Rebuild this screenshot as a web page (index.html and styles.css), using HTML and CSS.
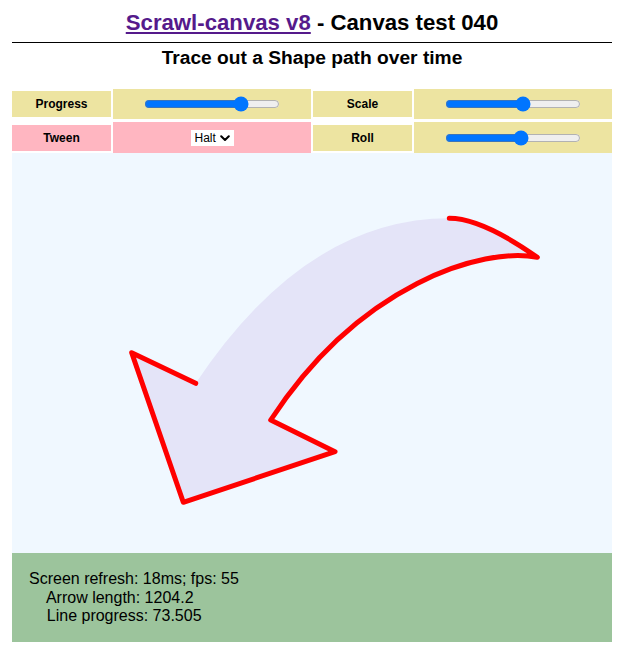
FILE: index.html
```html
<!DOCTYPE html>
<html lang="en">
<head>
<meta charset="utf-8">
<title>Scrawl-canvas v8 - Canvas test 040</title>
<link rel="stylesheet" href="styles.css">
</head>
<body>
<h1 class="title"><a class="title-link" href="#">Scrawl-canvas v8</a> - Canvas test 040</h1>
<hr class="rule">
<h2 class="subtitle">Trace out a Shape path over time</h2>

<div class="controls">
  <div class="label">Progress</div>
  <div class="cell"><input class="range" type="range" min="0" max="100" step="0.1" value="74"></div>
  <div class="label">Scale</div>
  <div class="cell"><input class="range" type="range" min="0" max="100" step="0.1" value="58.5"></div>

  <div class="label label-pink">Tween</div>
  <div class="cell cell-pink">
    <span class="sel-wrap">
      <select class="sel"><option>Halt</option><option>Run</option></select>
      <svg class="chev" width="10" height="7" viewBox="0 0 10 7"><path d="M1.2 1.2 L5 5 L8.8 1.2" fill="none" stroke="#000" stroke-width="2" stroke-linecap="round" stroke-linejoin="round"/></svg>
    </span>
  </div>
  <div class="label">Roll</div>
  <div class="cell"><input class="range" type="range" min="0" max="100" step="0.1" value="57"></div>
</div>

<div class="stage">
  <svg class="stage-svg" width="600" height="400" viewBox="0 0 600 400">
    <path class="arrow-fill" d="M437.3 65.3 Q469.7 65.3 525.3 104.3 C471.3 93.7 348 130.3 258.7 267 L323 298.7 L171.3 349.3 L119.7 199.7 L183.7 230.3 Q293.7 65.3 437.3 65.3 Z"/>
    <path class="arrow-line" d="M437.3 65.3 Q469.7 65.3 525.3 104.3 C471.3 93.7 348 130.3 258.7 267 L323 298.7 L171.3 349.3 L119.7 199.7 L183.7 230.3"/>
  </svg>
</div>

<p class="report">Screen refresh: 18ms; fps: 55
    Arrow length: 1204.2
    Line progress: 73.505</p>
</body>
</html>
```

FILE: styles.css
```css
html, body {
  margin: 0;
  padding: 0;
  background: #fff;
}
body {
  padding: 0 12px;
  font-family: "Liberation Sans", Arial, Helvetica, sans-serif;
  color: #000;
}
.title {
  margin: 10px 0 0;
  font-size: 22.2px;
  line-height: 26px;
  font-weight: bold;
  text-align: center;
}
.title-link {
  color: #551a8b;
  text-decoration: underline;
}
.rule {
  margin: 6px 0 0;
  height: 0;
  border: 0;
  border-top: 1px solid #000;
}
.subtitle {
  margin: 4px 0 0;
  font-size: 19.2px;
  line-height: 22px;
  font-weight: bold;
  text-align: center;
}
.controls {
  display: grid;
  grid-template-columns: 99px 198px 99px 198px;
  grid-template-rows: 30px 31px;
  column-gap: 2px;
  row-gap: 3px;
  margin-top: 20px;
}
.label {
  align-self: center;
  height: 26px;
  display: flex;
  align-items: center;
  justify-content: center;
  background: #ede4a1;
  font-size: 12px;
  font-weight: bold;
}
.label-pink {
  background: #ffb6c1;
}
.cell {
  display: flex;
  align-items: center;
  justify-content: center;
  background: #ede4a1;
}
.cell-pink {
  background: #ffb6c1;
}
.range {
  width: 136px;
  margin: 0;
}
.sel-wrap {
  position: relative;
  display: inline-block;
  height: 16px;
}
.sel {
  -webkit-appearance: none;
  appearance: none;
  display: block;
  width: 43px;
  height: 16px;
  margin: 0;
  padding: 0 0 0 4px;
  border: 0;
  border-radius: 0;
  background: #fff;
  color: #000;
  font-family: "Liberation Sans", Arial, sans-serif;
  font-size: 12px;
  line-height: 16px;
}
.chev {
  position: absolute;
  right: 4px;
  top: 5px;
  pointer-events: none;
}
.stage {
  height: 400px;
  background: #f0f8ff;
}
.stage-svg {
  display: block;
}
.arrow-fill {
  fill: #e4e4f8;
  stroke: none;
}
.arrow-line {
  fill: none;
  stroke: #ff0000;
  stroke-width: 5;
  stroke-linecap: round;
  stroke-linejoin: round;
}
.report {
  margin: 0;
  padding: 17px 17px 16px;
  background: #9cc49c;
  font-size: 16px;
  line-height: 18.5px;
  white-space: pre;
}
```
